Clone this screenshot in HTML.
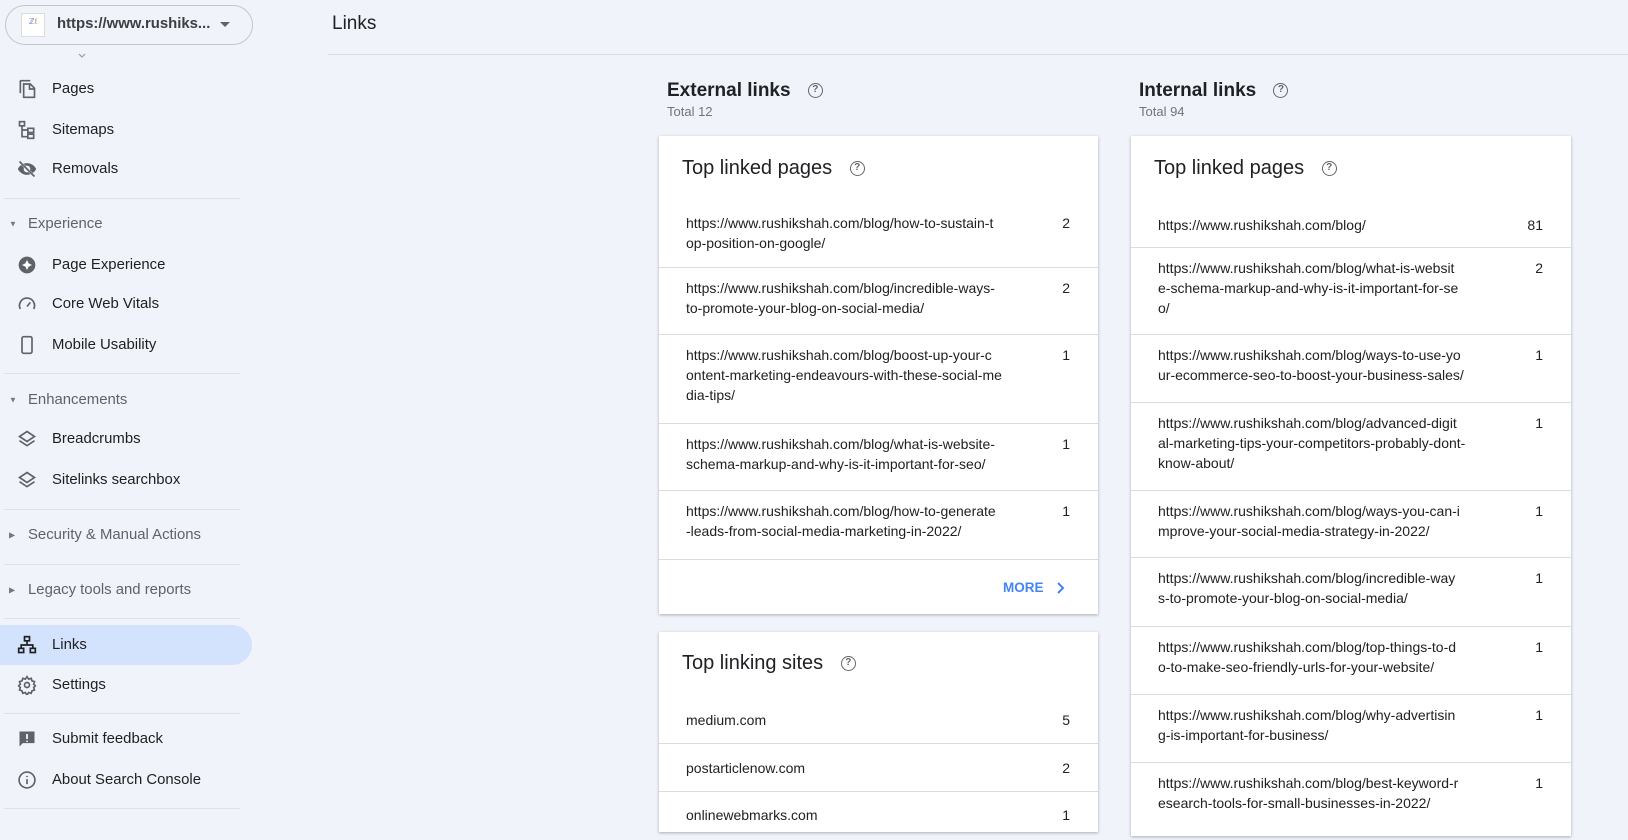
<!DOCTYPE html>
<html><head><meta charset="utf-8"><style>
*{box-sizing:border-box;margin:0;padding:0}
body{width:1628px;height:825px;overflow:hidden;background:#f0f4fa;font-family:"Liberation Sans",Arial,sans-serif;color:#1f1f1f;position:relative}
.a{position:absolute}
.nav{position:absolute;left:52px;font-size:14.9px;color:#1f1f1f;transform:translateY(-50%)}
.ic{position:absolute;left:17px;width:20px;height:20px;transform:translateY(-50%)}
.sec{position:absolute;left:28px;font-size:14.9px;color:#5f6368;transform:translateY(-50%)}
.tri{position:absolute;left:9px;transform:translateY(-50%);font-size:8px;color:#777}
.div{position:absolute;left:4px;width:236px;height:1px;background:#dfe1e5}
.card{position:absolute;background:#fff;box-shadow:0 1px 3px rgba(0,0,0,.3)}
.ct{position:absolute;left:23px;font-size:20px;color:#202124}
.row{position:absolute;left:0;right:0;border-bottom:1px solid #dadce0;font-size:14px;line-height:20px;color:#202124}
.row .u{position:absolute;left:27px;top:10px;white-space:nowrap}
.row .n{position:absolute;right:28px;top:10px}
.q{display:inline-block;width:15px;height:15px;border:1.5px solid #666;border-radius:50%;font-size:10px;line-height:12px;text-align:center;color:#666;font-weight:bold;vertical-align:middle}
</style></head><body>
<div class="a" style="left:5px;top:5px;width:248px;height:40px;border:1px solid #c4c7c5;border-radius:20px"></div>
<div class="a" style="left:21px;top:13px;width:24px;height:24px;background:#fff;border:1px solid #ddd;font-size:8px;color:#5570d0;text-align:center;line-height:16px">ℤ<span style="color:#e08a3a">ℓ</span></div>
<div class="a" style="left:57px;top:16px;font-size:14.9px;font-weight:bold;color:#3c4043">https://www.rushiks...</div>
<div class="a" style="left:220px;top:22px;width:0;height:0;border-left:5px solid transparent;border-right:5px solid transparent;border-top:5px solid #5f6368"></div>
<svg class="a" style="left:77px;top:53px" width="10" height="6" viewBox="0 0 10 6" fill="none" stroke="#999" stroke-width="1.2"><path d="M2 1l3 3 3-3"/></svg>
<div class="a" style="left:332px;top:13px;font-size:19px;color:#202124">Links</div>
<div class="a" style="left:328px;top:54px;width:1300px;height:1px;background:#dadce0"></div>

<svg class="ic" style="top:89px" viewBox="0 0 24 24" fill="none" stroke="#5f6368" stroke-width="2"><path d="M16 2H5a1 1 0 00-1 1v14"/><path d="M8 6h8l5 5v11H8z"/><path d="M15 6v6h6"/></svg>
<div class="nav" style="top:89px">Pages</div>
<svg class="ic" style="top:130px" viewBox="0 0 24 24" fill="none" stroke="#5f6368" stroke-width="2"><rect x="3" y="2" width="6" height="5"/><rect x="13" y="10" width="7" height="5"/><rect x="13" y="17" width="7" height="5"/><path d="M6 7v13h7M6 12h7"/></svg>
<div class="nav" style="top:130px">Sitemaps</div>
<svg class="ic" style="top:169px" viewBox="0 0 24 24" fill="#5f6368"><path d="M12 5C7 5 3 8 1 12c2 4 6 7 11 7s9-3 11-7c-2-4-6-7-11-7zm0 11a4 4 0 110-8 4 4 0 010 8z"/><path d="M3 3l18 18" stroke="#f0f4fa" stroke-width="3"/><path d="M3 3l18 18" stroke="#5f6368" stroke-width="2"/></svg>
<div class="nav" style="top:169px">Removals</div>
<div class="div" style="top:198px"></div>
<div class="tri" style="top:224px">▼</div><div class="sec" style="top:224px">Experience</div>
<svg class="ic" style="top:265px" viewBox="0 0 24 24"><circle cx="12" cy="12" r="10" fill="#5f6368"/><path d="M12 6l2 4 4 2-4 2-2 4-2-4-4-2 4-2z" fill="#fff"/></svg>
<div class="nav" style="top:265px">Page Experience</div>
<svg class="ic" style="top:304px" viewBox="0 0 24 24" fill="none" stroke="#5f6368" stroke-width="2"><path d="M4 18a9 9 0 1116 0"/><path d="M12 15l4-5"/></svg>
<div class="nav" style="top:304px">Core Web Vitals</div>
<svg class="ic" style="top:345px" viewBox="0 0 24 24" fill="none" stroke="#5f6368" stroke-width="2"><rect x="6" y="2" width="12" height="20" rx="2"/></svg>
<div class="nav" style="top:345px">Mobile Usability</div>
<div class="div" style="top:373px"></div>
<div class="tri" style="top:400px">▼</div><div class="sec" style="top:400px">Enhancements</div>
<svg class="ic" style="top:439px" viewBox="0 0 24 24" fill="none" stroke="#5f6368" stroke-width="2"><path d="M12 3l9 6-9 6-9-6z M3 14l9 6 9-6"/></svg>
<div class="nav" style="top:439px">Breadcrumbs</div>
<svg class="ic" style="top:480px" viewBox="0 0 24 24" fill="none" stroke="#5f6368" stroke-width="2"><path d="M12 3l9 6-9 6-9-6z M3 14l9 6 9-6"/></svg>
<div class="nav" style="top:480px">Sitelinks searchbox</div>
<div class="div" style="top:509px"></div>
<div class="tri" style="top:535px">▶</div><div class="sec" style="top:535px">Security &amp; Manual Actions</div>
<div class="div" style="top:564px"></div>
<div class="tri" style="top:590px">▶</div><div class="sec" style="top:590px">Legacy tools and reports</div>
<div class="div" style="top:618px"></div>
<div class="a" style="left:0;top:625px;width:252px;height:40px;background:#d3e3fd;border-radius:0 20px 20px 0"></div>
<svg class="ic" style="top:645px" viewBox="0 0 24 24" fill="none" stroke="#1f1f1f" stroke-width="2"><rect x="9" y="2" width="6" height="5"/><rect x="2" y="16" width="6" height="5"/><rect x="16" y="16" width="6" height="5"/><path d="M12 7v5M5 16v-4h14v4"/></svg>
<div class="nav" style="top:645px">Links</div>
<svg class="ic" style="top:685px" viewBox="0 0 24 24" fill="none" stroke="#5f6368" stroke-width="2"><circle cx="12" cy="12" r="3"/><path d="M12 2l2 3 3-1 1 3 3 1-1 3 2 2-2 2 1 3-3 1-1 3-3-1-2 3-2-3-3 1-1-3-3-1 1-3-2-2 2-2-1-3 3-1 1-3 3 1z"/></svg>
<div class="nav" style="top:685px">Settings</div>
<div class="div" style="top:713px"></div>
<svg class="ic" style="top:739px" viewBox="0 0 24 24" fill="#5f6368"><path d="M3 3h18v14H7l-4 4z"/><path d="M12 6v6M12 14v1.5" stroke="#fff" stroke-width="2"/></svg>
<div class="nav" style="top:739px">Submit feedback</div>
<svg class="ic" style="top:780px" viewBox="0 0 24 24" fill="none" stroke="#5f6368" stroke-width="2"><circle cx="12" cy="12" r="9.5"/><path d="M12 11v6M12 7v1.5"/></svg>
<div class="nav" style="top:780px">About Search Console</div>
<div class="div" style="top:808px"></div>

<div class="a" style="left:667px;top:80px;font-size:19px;font-weight:bold;color:#202124">External links <span class="q" style="margin-left:12px">?</span></div>
<div class="a" style="left:667px;top:104px;font-size:13px;color:#70757a">Total 12</div>
<div class="card" style="left:659px;top:136px;width:439px;height:478px">
  <div class="ct" style="top:21px">Top linked pages <span class="q" style="margin-left:12px">?</span></div>
  <div class="row" style="top:67px;height:65px"><div class="u">https://www.rushikshah.com/blog/how-to-sustain-t<br>op-position-on-google/</div><div class="n">2</div></div>
  <div class="row" style="top:132px;height:67px"><div class="u">https://www.rushikshah.com/blog/incredible-ways-<br>to-promote-your-blog-on-social-media/</div><div class="n">2</div></div>
  <div class="row" style="top:199px;height:89px"><div class="u">https://www.rushikshah.com/blog/boost-up-your-c<br>ontent-marketing-endeavours-with-these-social-me<br>dia-tips/</div><div class="n">1</div></div>
  <div class="row" style="top:288px;height:67px"><div class="u">https://www.rushikshah.com/blog/what-is-website-<br>schema-markup-and-why-is-it-important-for-seo/</div><div class="n">1</div></div>
  <div class="row" style="top:355px;height:69px"><div class="u">https://www.rushikshah.com/blog/how-to-generate<br>-leads-from-social-media-marketing-in-2022/</div><div class="n">1</div></div>
  <div class="a" style="left:344px;top:444px;font-size:13.5px;color:#4285f4;font-weight:bold">MORE</div>
  <svg class="a" style="left:396px;top:445px" width="12" height="14" viewBox="0 0 12 14" fill="none" stroke="#4285f4" stroke-width="2"><path d="M3 2l5 5-5 5"/></svg>
</div>
<div class="card" style="left:659px;top:632px;width:439px;height:200px">
  <div class="ct" style="top:20px">Top linking sites <span class="q" style="margin-left:12px">?</span></div>
  <div class="row" style="top:65px;height:47px"><div class="u" style="top:13px">medium.com</div><div class="n" style="top:13px">5</div></div>
  <div class="row" style="top:112px;height:48px"><div class="u" style="top:14px">postarticlenow.com</div><div class="n" style="top:14px">2</div></div>
  <div class="row" style="top:160px;height:48px;border:none"><div class="u" style="top:13px">onlinewebmarks.com</div><div class="n" style="top:13px">1</div></div>
</div>

<div class="a" style="left:1139px;top:80px;font-size:19px;font-weight:bold;color:#202124">Internal links <span class="q" style="margin-left:12px">?</span></div>
<div class="a" style="left:1139px;top:104px;font-size:13px;color:#70757a">Total 94</div>
<div class="card" style="left:1131px;top:136px;width:440px;height:700px">
  <div class="ct" style="top:21px">Top linked pages <span class="q" style="margin-left:12px">?</span></div>
  <div class="row" style="top:67px;height:45px"><div class="u" style="top:12px">https://www.rushikshah.com/blog/</div><div class="n" style="top:12px">81</div></div>
  <div class="row" style="top:112px;height:87px"><div class="u">https://www.rushikshah.com/blog/what-is-websit<br>e-schema-markup-and-why-is-it-important-for-se<br>o/</div><div class="n">2</div></div>
  <div class="row" style="top:199px;height:68px"><div class="u">https://www.rushikshah.com/blog/ways-to-use-yo<br>ur-ecommerce-seo-to-boost-your-business-sales/</div><div class="n">1</div></div>
  <div class="row" style="top:267px;height:88px"><div class="u">https://www.rushikshah.com/blog/advanced-digit<br>al-marketing-tips-your-competitors-probably-dont-<br>know-about/</div><div class="n">1</div></div>
  <div class="row" style="top:355px;height:67px"><div class="u">https://www.rushikshah.com/blog/ways-you-can-i<br>mprove-your-social-media-strategy-in-2022/</div><div class="n">1</div></div>
  <div class="row" style="top:422px;height:69px"><div class="u">https://www.rushikshah.com/blog/incredible-way<br>s-to-promote-your-blog-on-social-media/</div><div class="n">1</div></div>
  <div class="row" style="top:491px;height:68px"><div class="u">https://www.rushikshah.com/blog/top-things-to-d<br>o-to-make-seo-friendly-urls-for-your-website/</div><div class="n">1</div></div>
  <div class="row" style="top:559px;height:68px"><div class="u">https://www.rushikshah.com/blog/why-advertisin<br>g-is-important-for-business/</div><div class="n">1</div></div>
  <div class="row" style="top:627px;height:68px;border:none"><div class="u">https://www.rushikshah.com/blog/best-keyword-r<br>esearch-tools-for-small-businesses-in-2022/</div><div class="n">1</div></div>
</div>
</body></html>
